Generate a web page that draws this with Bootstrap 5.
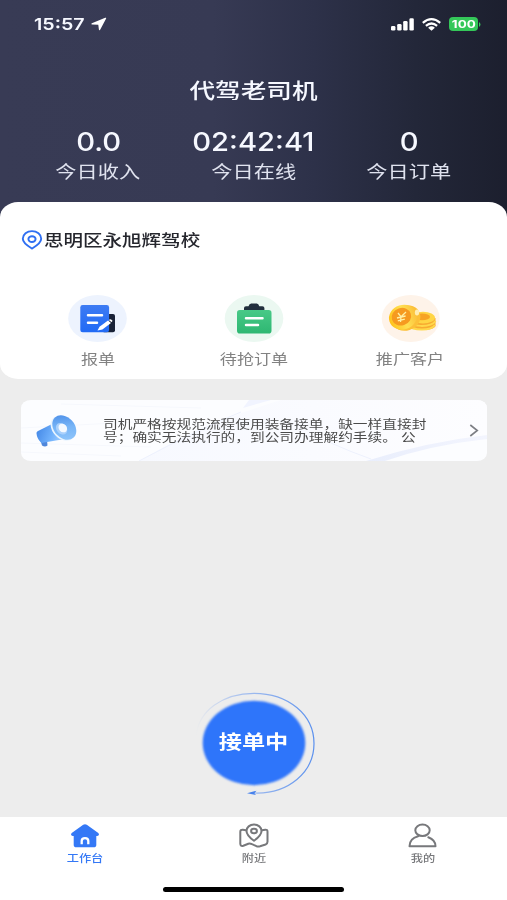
<!DOCTYPE html>
<html lang="zh-CN">
<head>
<meta charset="utf-8">
<meta name="viewport" content="width=device-width, initial-scale=1">
<title>代驾老司机</title>
<link href="https://cdn.jsdelivr.net/npm/bootstrap@5.3.0/dist/css/bootstrap.min.css" rel="stylesheet">
<style>
  body { font-family: Inter, "Noto Sans CJK SC", sans-serif; background: #ededed; height: 900px; overflow: hidden; }
  svg { display: block; flex: none; overflow: visible; }
  .screen { height: 900px; }
  /* horizontally extended lettering */
  .wide { display: inline-block; transform: scaleX(1.22); white-space: nowrap; }
  .wide-start { transform-origin: left center; }
  .hero { height: 218px; color: #f6f8ff; background: linear-gradient(90deg, #383b55 0, #373a54 42%, #2d3149 62%, #232739 82%, #1c1f2e 100%); }
  .status { height: 48px; padding: 0 26px 0 34px; }
  .clock { font-size: 16.5px; font-weight: 600; line-height: 20px; width: 57px; }
  .clock .wide { transform: scaleX(1.19); }
  .battery { width: 29px; height: 14px; border-radius: 4px; background: #34c759; font-size: 11px; font-weight: 700; line-height: 14px; }
  .hero-title { font-size: 21px; font-weight: 500; line-height: 30px; padding-top: 28px; }
  .stats { padding: 21px 20.5px 0; }
  .stat-num { font-size: 25.5px; font-weight: 500; line-height: 30px; }
  .stat-num .wide { transform: scaleX(1.145); }
  .stat-label { font-size: 17.4px; line-height: 24px; margin-top: 3px; color: #e0e3ef; }
  .panel { height: 177px; margin-top: -16px; border-radius: 18px/15px; }
  .place { padding: 23px 0 0 22px; height: 52px; color: #25262d; font-size: 16px; font-weight: 500; line-height: 24px; gap: 2px; }
  .actions { padding: 39px 19.5px 0; }
  .action-label { font-size: 14px; line-height: 20px; margin-top: 6px; color: #828282; }
  .notice { height: 61px; margin: 21px 20px 0 21px; border-radius: 10px/8px; overflow: hidden; }
  .notice-bg { left: 0; top: 0; }
  .notice-text { font-size: 12.05px; line-height: 13px; color: #4b4b4b; margin-left: 26px; width: 264px; }
  .go-area { padding-bottom: 22px; }
  .go { width: 120px; height: 104px; }
  .go-text { font-size: 19px; font-weight: 600; line-height: 24px; padding-bottom: 1px; }
  .tabs { height: 83px; padding-top: 5px; }
  .tab-label { font-size: 10px; font-weight: 500; line-height: 14px; margin-top: 1px; color: #77787b; }
  .tab-label.on { color: #3478f6; }
  .home-bar { width: 181px; height: 5px; background: #000; margin-bottom: 8px; }
</style>
</head>
<body>
<div class="screen d-flex flex-column">
  <header class="hero">
    <div class="status d-flex align-items-center">
      <span class="clock"><span class="wide wide-start">15:57</span></span>
      <svg width="17" height="14" viewBox="0 0 17 14"><path d="M14.2.8Q15.8.3 15 1.8L9.3 12.6Q8.2 14 7.9 12.4L7.3 7.8 1 7.4Q-.6 7 .9 6.2Z" fill="#fff"/></svg>
      <div class="ms-auto d-flex align-items-center">
        <svg width="23" height="13" viewBox="0 0 23 13" fill="#fff"><rect x="0" y="8" width="4.4" height="4.5" rx="1.3"/><rect x="6.2" y="6" width="4.4" height="6.5" rx="1.3"/><rect x="12.2" y="3" width="4.4" height="9.5" rx="1.3"/><rect x="18.4" y="0.3" width="4.4" height="12.2" rx="1.3"/></svg>
        <svg class="ms-2" width="19" height="13" viewBox="0 0 19 13" fill="none" stroke="#fff" stroke-width="2.2"><path d="M.8 4.8 Q9.5-2.4 18.2 4.8M3.9 7.8 Q9.5 3.2 15.1 7.8"/><path d="M6.1 9.7 Q9.5 7 12.9 9.7L9.5 12.7Z" fill="#fff" stroke="none"/></svg>
        <div class="battery ms-2 text-white text-center"><span class="wide">100</span></div>
        <svg width="3" height="5" viewBox="0 0 3 5"><path d="M1 0Q4 2.5 1 5Z" fill="#34c759"/></svg>
      </div>
    </div>
    <h1 class="hero-title text-center m-0"><span class="wide">代驾老司机</span></h1>
    <div class="stats row g-0 text-center">
      <div class="col"><div class="stat-num"><span class="wide">0.0</span></div><div class="stat-label"><span class="wide">今日收入</span></div></div>
      <div class="col"><div class="stat-num"><span class="wide">02:42:41</span></div><div class="stat-label"><span class="wide">今日在线</span></div></div>
      <div class="col"><div class="stat-num"><span class="wide">0</span></div><div class="stat-label"><span class="wide">今日订单</span></div></div>
    </div>
  </header>

  <section class="panel bg-white position-relative">
    <div class="place d-flex align-items-center">
      <svg width="20" height="20" viewBox="0 0 20 20" fill="none" stroke="#2f6ff2" stroke-width="1.9"><path d="M10 18.6C6.2 16.2 .8 13.2 .8 8.8C.8 4.4 5 1.1 10 1.1S19.2 4.4 19.2 8.8C19.2 13.2 13.8 16.2 10 18.6Z" stroke-linejoin="round"/><ellipse cx="10" cy="9.1" rx="3.6" ry="2.9"/></svg>
      <span class="wide wide-start">思明区永旭辉驾校</span>
    </div>
    <div class="actions row g-0 text-center">
      <div class="col d-flex flex-column align-items-center">
        <svg width="60" height="50" viewBox="0 0 60 50">
          <defs><linearGradient id="blueDoc" x2="0" y2="1"><stop stop-color="#3d7bf3"/><stop offset="1" stop-color="#216af5"/></linearGradient></defs>
          <ellipse cx="29.5" cy="25.5" rx="29.3" ry="23.5" fill="#edf3fe"/>
          <rect x="34" y="21" width="13" height="18.3" rx="2" fill="#192237"/>
          <rect x="12.3" y="12" width="28.8" height="27.3" rx="2.4" fill="url(#blueDoc)"/>
          <path d="M20 22.2H34M20 29.7H29" stroke="#fff" stroke-width="2.5" stroke-linecap="round"/>
          <path d="M29.5 37.6L31.5 33.7 40 27.6 43 30 34.4 36.4Z" fill="#fff"/><path d="M40.8 27L42 26.2Q43.5 26 44.5 27.8L43.7 29.3Z" fill="#fff"/>
        </svg>
        <div class="action-label"><span class="wide">报单</span></div>
      </div>
      <div class="col d-flex flex-column align-items-center">
        <svg width="60" height="50" viewBox="0 0 60 50">
          <defs><linearGradient id="greenDoc" x2="0" y2="1"><stop stop-color="#48c987"/><stop offset="1" stop-color="#2eb772"/></linearGradient></defs>
          <ellipse cx="30" cy="25.5" rx="29.3" ry="23.5" fill="#ebf8f1"/>
          <rect x="13" y="17" width="34.5" height="23.5" rx="2.8" fill="url(#greenDoc)"/>
          <path d="M20 17V15Q20 13.2 22 13.2H24.5Q25.3 10.6 27.2 10.6H32.8Q34.5 10.6 35.3 13.2H38.4Q40.4 13.2 40.4 15V17Z" fill="#222f3d"/>
          <path d="M22 25.3H38.5M22 32H34" stroke="#fff" stroke-width="2.5" stroke-linecap="round"/>
        </svg>
        <div class="action-label"><span class="wide">待抢订单</span></div>
      </div>
      <div class="col d-flex flex-column align-items-center">
        <svg width="60" height="50" viewBox="0 0 60 50">
          <defs><linearGradient id="coin" x2="1"><stop stop-color="#ffc21b"/><stop offset=".55" stop-color="#ffe052"/><stop offset="1" stop-color="#fbc03a"/></linearGradient></defs>
          <ellipse cx="30.7" cy="25.5" rx="29" ry="23.5" fill="#fef3e9"/>
          <path d="M30 25V32C30 38 53 39 55.5 33V25Z" fill="#f8ab31"/>
          <path d="M28 28C30 34 51 35 55.5 28M28 32C33 38 51 38 55 32" fill="none" stroke="#ffd84b" stroke-width="2"/>
          <ellipse cx="43" cy="24.7" rx="12" ry="5.9" fill="#ffd544"/><ellipse cx="42" cy="23.9" rx="8" ry="3.4" fill="#f7a325"/>
          <ellipse cx="25.8" cy="25" rx="14.8" ry="12.5" fill="#fcc038" transform="rotate(-18 25.8 25)"/>
          <ellipse cx="23" cy="24.2" rx="14.2" ry="12.2" fill="url(#coin)" transform="rotate(-18 23 24.2)"/>
          <ellipse cx="21.4" cy="23.7" rx="9.9" ry="8.7" fill="#f69a20" transform="rotate(-18 21.4 23.7)"/>
          <path d="M18 20L21 23.7 26 19M17 25L25.6 23M17.8 27.8L24.8 26.2M21 23.7L20.5 29" fill="none" stroke="#fff0a6" stroke-width="1.3"/>
          <ellipse cx="37" cy="19.5" rx="2.2" ry="3" fill="#fff6c8" opacity=".85"/>
        </svg>
        <div class="action-label"><span class="wide">推广客户</span></div>
      </div>
    </div>
  </section>

  <section class="notice position-relative">
    <svg class="notice-bg position-absolute" width="466" height="61" viewBox="0 0 466 61">
      <defs>
        <linearGradient id="fold" x1="0" x2="1"><stop stop-color="#f7f9ff"/><stop offset="1" stop-color="#fdfdff"/></linearGradient>
        <linearGradient id="edge" x1="0" x2="1"><stop stop-color="#e9eefc"/><stop offset="1" stop-color="#f3f5fe"/></linearGradient>
      </defs>
      <rect width="466" height="61" fill="#fcfdff"/>
      <path d="M0 28L150 20M0 43L130 47M0 52L100 56M40 4L180 8" stroke="#f6f8fd" fill="none"/>
      <path d="M118 61Q180 24 260 0H466V35Q410 43 353 61Z" fill="url(#fold)"/>
      <path d="M345 61Q405 42 466 35V39Q410 45 364 61Z" fill="url(#edge)"/>
      <path d="M118 61Q180 28 220 12M310 43Q330 52 350 59" fill="none" stroke="#edf1fd"/>
      <path d="M222 8L250 0H228Z" fill="#f1f4ff"/>
    </svg>
    <div class="position-relative d-flex align-items-center h-100 ps-3">
      <svg width="40" height="34" viewBox="0 0 40 34">
        <defs>
          <linearGradient id="horn" x1="0" x2="1" y2=".3"><stop stop-color="#3f83e4"/><stop offset=".7" stop-color="#6fb0fb"/><stop offset="1" stop-color="#8fc4ff"/></linearGradient>
          <linearGradient id="bell" x1="0" y1="0" x2="1" y2=".6"><stop stop-color="#4487e6"/><stop offset=".55" stop-color="#76b4f6"/><stop offset="1" stop-color="#8cc3fa"/></linearGradient>
        </defs>
        <path d="M3 25L5 31.5Q8 33.5 10.5 31.5L10 26Z" fill="#4f87db"/>
        <path d="M-.5 19.5Q-.8 17.6 1 17L16 9.5 25 25.5 7 28.5Q4.500 29.500 3.500 28Q0 24.500 -.5 19.500Z" fill="url(#horn)"/>
        <ellipse cx="25.800" cy="14.300" rx="14" ry="10.300" transform="rotate(47 25.800 14.300)" fill="#eaf5ff"/>
        <ellipse cx="27.300" cy="13.600" rx="13.700" ry="10.300" transform="rotate(47 27.300 13.600)" fill="url(#bell)"/>
        <ellipse cx="24.600" cy="14.800" rx="6.400" ry="5" transform="rotate(47 24.600 14.800)" fill="#a9d0fc"/>
        <ellipse cx="25.800" cy="14" rx="4.700" ry="3.900" transform="rotate(47 25.800 14)" fill="#f4f9ff"/>
      </svg>
      <div class="notice-text"><span class="wide wide-start">司机严格按规范流程使用装备接单，缺一样直接封<br>号；确实无法执行的，到公司办理解约手续。 公</span></div>
      <svg class="ms-auto me-2" width="9" height="13" viewBox="0 0 9 13" fill="none" stroke="#7d7f84" stroke-width="1.6"><path d="M.3 1L7.3 6.5 .3 12"/></svg>
    </div>
  </section>

  <div class="go-area flex-grow-1 d-flex justify-content-center align-items-end">
    <div class="go position-relative d-flex align-items-center justify-content-center">
      <svg class="position-absolute top-0 start-0" width="120" height="104" viewBox="0 0 120 104">
        <defs>
          <linearGradient id="ring" x1="0" x2="1"><stop offset="0" stop-color="#7da5ef" stop-opacity="0"/><stop offset=".4" stop-color="#7da5ef" stop-opacity=".65"/><stop offset="1" stop-color="#5a90ee"/></linearGradient>
          <filter id="soft" x="-10%" y="-10%" width="120%" height="120%"><feGaussianBlur stdDeviation=".9"/></filter>
        </defs>
        <ellipse cx="60" cy="52" rx="51.3" ry="42.3" fill="#2f74fa" filter="url(#soft)"/>
        <path d="M2 45C5 20 29 2.8 60 2.8C94 2.8 120 24 120 53C120 82 94 103.5 61 102.5" transform="translate(0 -.5)" fill="none" stroke="url(#ring)" stroke-width="1.2"/>
        <path d="M53 102.3L62.5 99.7 60.5 102.3 62 104Z" fill="#4782ec"/>
      </svg>
      <span class="go-text position-relative text-white"><span class="wide">接单中</span></span>
    </div>
  </div>

  <nav class="tabs bg-white d-flex flex-column justify-content-between align-items-center">
    <div class="row g-0 w-100 text-center">
      <div class="col d-flex flex-column align-items-center">
        <svg width="30" height="28" viewBox="0 0 30 28"><path d="M13.2 2.8Q15 1.7 16.8 2.8L28.3 11Q30 13.3 27.3 14H26.3V23Q26.3 25.3 23.5 25.3H6.5Q3.7 25.3 3.7 23V14H2.7Q0 13.3 1.700 11Z" fill="#3478f6"/><path d="M11.7 22.2V19Q11.7 16.2 15 16.2T18.3 19V22.2" fill="none" stroke="#fff" stroke-width="2.3"/></svg>
        <div class="tab-label on"><span class="wide">工作台</span></div>
      </div>
      <div class="col d-flex flex-column align-items-center">
        <svg width="30" height="28" viewBox="0 0 30 28" fill="none" stroke="#77787b" stroke-width="2" stroke-linejoin="round" stroke-linecap="round"><path d="M7 8.2L3.8 7.7Q1.3 7.5 1.3 9.7V21.8Q1.3 24.5 4.3 23.7L9.3 21.7Q11 21.1 13 22.2L17.5 24.2Q19.2 24.7 21 24.2L26.6 22.5Q28.5 21.8 28.5 19.8V9.7Q28.5 7.5 26.3 7.7L23 8.2"/><path d="M15 18.8C11 15.9 7.5 13 7.500 9C7.500 5.2 10.8 2.6 15 2.6S22.5 5.2 22.5 9C22.5 13 19 15.9 15 18.8Z"/><ellipse cx="15" cy="9" rx="2.900" ry="2.300"/></svg>
        <div class="tab-label"><span class="wide">附近</span></div>
      </div>
      <div class="col d-flex flex-column align-items-center">
        <svg width="30" height="28" viewBox="0 0 30 28" fill="none" stroke="#77787b" stroke-width="2" stroke-linejoin="round" stroke-linecap="round"><ellipse cx="14.500" cy="8.300" rx="7.200" ry="5.800"/><path d="M10.100 14.200Q1.500 16.500 1.500 24.300H27.500Q27.500 18 20.300 15.300"/></svg>
        <div class="tab-label"><span class="wide">我的</span></div>
      </div>
    </div>
    <div class="home-bar rounded-pill"></div>
  </nav>
</div>
<script src="https://cdn.jsdelivr.net/npm/bootstrap@5.3.0/dist/js/bootstrap.bundle.min.js"></script>
</body>
</html>
